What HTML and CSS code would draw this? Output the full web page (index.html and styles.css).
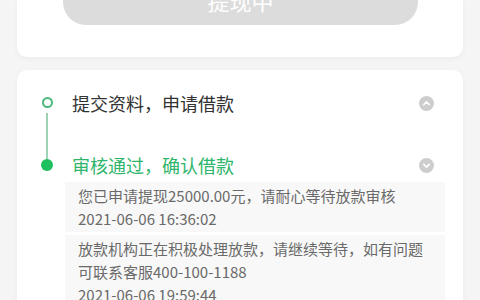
FILE: index.html
```html
<!DOCTYPE html>
<html lang="zh-CN">

<head>
    <meta charset="UTF-8">
    <meta name="viewport" content="width=device-width, initial-scale=1.0">
    <title>提现进度</title>
    <link rel="stylesheet" href="styles.css">
</head>

<body>
    <div class="page">
        <!-- Withdraw button card -->
        <div class="card card-top">
            <button class="withdraw-btn" disabled>提现中</button>
        </div>

        <!-- Progress timeline -->
        <div class="card card-steps">
            <div class="step">
                <div class="rail">
                    <span class="dot dot-hollow"></span>
                    <span class="line"></span>
                </div>
                <div class="step-main step-collapsed">
                    <div class="step-head">
                        <span class="step-title">提交资料，申请借款</span>
                        <svg class="toggle" width="15" height="15" viewBox="0 0 15 15">
                            <circle cx="7.5" cy="7.5" r="7.5" fill="#cdcdcd" />
                            <polyline points="4.8,8.6 7.5,5.9 10.2,8.6" fill="none" stroke="#fff" stroke-width="1.6" stroke-linecap="round" stroke-linejoin="round" />
                        </svg>
                    </div>
                </div>
            </div>

            <div class="step">
                <div class="rail">
                    <span class="dot dot-filled"></span>
                </div>
                <div class="step-main">
                    <div class="step-head">
                        <span class="step-title active">审核通过，确认借款</span>
                        <svg class="toggle" width="15" height="15" viewBox="0 0 15 15">
                            <circle cx="7.5" cy="7.5" r="7.5" fill="#cdcdcd" />
                            <polyline points="4.8,6.4 7.5,9.1 10.2,6.4" fill="none" stroke="#fff" stroke-width="1.6" stroke-linecap="round" stroke-linejoin="round" />
                        </svg>
                    </div>
                    <div class="record">
                        <p>您已申请提现25000.00元，请耐心等待放款审核</p>
                        <p>2021-06-06 16:36:02</p>
                    </div>
                    <div class="record">
                        <p>放款机构正在积极处理放款，请继续等待，如有问题可联系客服400-100-1188</p>
                        <p>2021-06-06 19:59:44</p>
                    </div>
                </div>
            </div>
        </div>
    </div>
</body>

</html>
```

FILE: styles.css
```css
body {
    font-family: "Noto Sans CJK SC", "Noto Sans", sans-serif;
    margin: 0;
    padding: 0;
    background-color: #f5f5f5;
    color: #333;
}

.page {
    padding: 0 17px;
}

.card {
    background: #fff;
    border-radius: 10px;
    box-shadow: 0 2px 6px rgba(0, 0, 0, 0.04);
}

.card-top {
    display: flex;
    flex-direction: column;
    border-radius: 0 0 10px 10px;
    padding: 0 45px 32px 46px;
}

.withdraw-btn {
    margin-top: -25px;
    height: 50px;
    border: none;
    border-radius: 23px;
    background-color: #dcdcdc;
    color: #fff;
    font-family: inherit;
    font-size: 22px;
    line-height: 50px;
    padding: 0;
}

.card-steps {
    margin-top: 13px;
    padding: 22px 18px 20px 24px;
}

.step {
    display: flex;
}

.rail {
    width: 12px;
    display: flex;
    flex-direction: column;
    align-items: center;
}

.dot {
    box-sizing: border-box;
    border-radius: 50%;
    margin-top: 5px;
    flex: none;
}

.dot-hollow {
    width: 11px;
    height: 11px;
    border: 2px solid #49b87b;
    background: #fff;
}

.dot-filled {
    width: 12px;
    height: 12px;
    background: #1fbf5f;
}

.line {
    flex: 1;
    width: 2px;
    background: #9fd2b4;
    margin-top: 5px;
    margin-bottom: -5px;
}

.step-main {
    flex: 1;
    margin-left: 12px;
}

.step-collapsed {
    padding-bottom: 40px;
}

.step-head {
    display: flex;
    align-items: center;
    justify-content: space-between;
    height: 22px;
    padding: 0 11px 0 7px;
}

.step-title {
    font-size: 18px;
    color: #333;
}

.step-title.active {
    color: #2fb56b;
}

.toggle {
    flex: none;
}

.record {
    background: #f8f8f8;
    padding: 2px 13px;
    margin-top: 3px;
    font-size: 15px;
    line-height: 23px;
    color: #6a6a6a;
}

.step-head + .record {
    margin-top: 6px;
}

.record p {
    margin: 0;
}
```
